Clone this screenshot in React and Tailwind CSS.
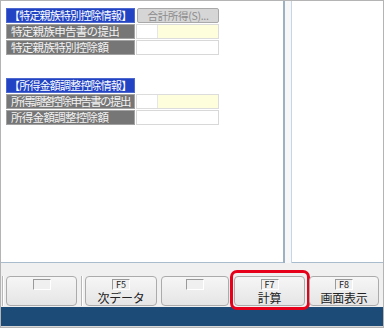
import React from "react";

const font = { fontFamily: '"Noto Sans CJK JP", "Noto Sans", sans-serif' };

function Label({ children, tight }) {
  return (
    <div
      className={
        "w-[129px] h-[15px] bg-[#767676] border border-[#a2a2a2] text-[#f4f4f4] text-[11.5px] leading-[13px] pl-[4px] whitespace-nowrap overflow-hidden " +
        (tight ? "tracking-[-1.6px]" : "tracking-[-0.7px]")
      }
    >
      {children}
    </div>
  );
}

function Header({ children }) {
  return (
    <div className="w-[129px] h-[15px] bg-[#2243c3] border border-[#4d68cf] text-white text-[11px] leading-[13px] pl-[2px] whitespace-nowrap overflow-hidden tracking-[-0.8px]">
      {children}
    </div>
  );
}

function SubmitInput() {
  return (
    <div className="w-[83px] h-[15px] border border-[#dcdcdc] flex">
      <div className="w-[20px] bg-white" />
      <div className="flex-1 bg-[#fefedc] border-l border-[#e6e6e6]" />
    </div>
  );
}

function AmountInput() {
  return <div className="w-[83px] h-[15px] border border-[#d8d8d8] bg-white" />;
}

function FnButton({ fkey, label, width, highlight }) {
  return (
    <div
      className={
        "relative h-[30px] shrink-0 border border-[#ababab] rounded-[4px] bg-gradient-to-b from-[#f6f6f6] to-[#e5e5e5] flex flex-col items-center " +
        width
      }
    >
      <div className="mt-[2px] w-[18px] h-[11px] shrink-0 border-t border-l border-[#9a9a9a] border-b border-r border-b-white border-r-white bg-[#f0f0f0] text-[9px] leading-[10px] text-[#222] text-center">
        {fkey}
      </div>
      <div className="text-[12px] leading-[12px] mt-[2px] text-[#222] tracking-[-0.3px] whitespace-nowrap">{label}</div>
      {highlight && (
        <div className="absolute -left-[5px] -top-[7px] w-[80px] h-[40px] border-[3px] border-[#e6001a] rounded-[7px]" />
      )}
    </div>
  );
}

function Sep() {
  return <div className="h-[30px] w-[2px] shrink-0 border-l border-[#b8b8b8] border-r border-r-white" />;
}

export default function App() {
  return (
    <div
      className="w-[384px] h-[328px] bg-[#f0f0f0] border-l border-r border-t border-[#b4b4b4] flex flex-col overflow-hidden"
      style={font}
    >
      <div className="h-[262px] flex shrink-0">
        <div className="w-[282px] bg-white border-b border-[#a9bccd] pl-[5px] pt-[7px] flex flex-col gap-[1px]">
          <div className="flex">
            <Header>【特定親族特別控除情報】</Header>
            <div className="ml-[2px] w-[82px] h-[15px] border border-[#a9a9a9] rounded-[2px] bg-[#d6d6d6] text-[#8c8c8c] text-[10.5px] leading-[13px] text-center whitespace-nowrap tracking-[-0.3px]">
              合計所得(S)...
            </div>
          </div>
          <div className="flex gap-[1px]">
            <Label>特定親族申告書の提出</Label>
            <SubmitInput />
          </div>
          <div className="flex gap-[1px]">
            <Label>特定親族特別控除額</Label>
            <AmountInput />
          </div>

          <div className="mt-[22px] flex">
            <Header>【所得金額調整控除情報】</Header>
          </div>
          <div className="flex gap-[1px]">
            <Label tight>所得調整控除申告書の提出</Label>
            <SubmitInput />
          </div>
          <div className="flex gap-[1px]">
            <Label>所得金額調整控除額</Label>
            <AmountInput />
          </div>
        </div>
        <div className="w-[2px] bg-[#9db1c4]" />
        <div className="w-[6px] bg-[#f7f7f7]" />
        <div className="w-[1px] bg-[#c4d6e8]" />
        <div className="flex-1 bg-white border-b border-[#a9bccd]" />
      </div>

      <div className="h-[44px] shrink-0 flex items-end pb-[1px] pl-[1px]">
        <Sep />
        <div className="ml-[2px]">
          <FnButton fkey="" label="" width="w-[71px]" />
        </div>
        <div className="ml-[4px]">
          <Sep />
        </div>
        <div className="ml-[2px]">
          <FnButton fkey="F5" label="次データ" width="w-[72px]" />
        </div>
        <div className="ml-[4px]">
          <FnButton fkey="" label="" width="w-[68px]" />
        </div>
        <div className="ml-[5px]">
          <FnButton fkey="F7" label="計算" width="w-[71px]" highlight />
        </div>
        <div className="ml-[4px]">
          <FnButton fkey="F8" label="画面表示" width="w-[70px]" />
        </div>
      </div>

      <div className="h-[19px] shrink-0 bg-[#1d4b78]" />
      <div className="flex-1 bg-[#d8d8d8] border-b border-[#b4b4b4]" />
    </div>
  );
}
